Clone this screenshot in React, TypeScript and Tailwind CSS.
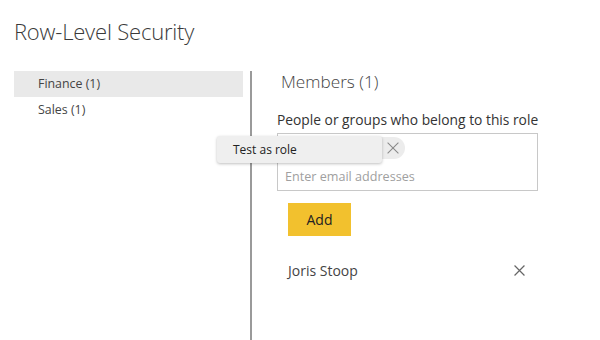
import React from "react";

function XIcon({ size, color, sw }: { size: number; color: string; sw: number }) {
  return (
    <svg width={size} height={size} viewBox="0 0 10 10" fill="none">
      <path d="M0.5 0.5 L9.5 9.5 M9.5 0.5 L0.5 9.5" stroke={color} strokeWidth={sw} />
    </svg>
  );
}

export default function App() {
  return (
    <div className="relative w-[600px] h-[340px] bg-white flex flex-col overflow-hidden font-['Open_Sans',sans-serif] text-[#333]">
      <h1 className="mt-[17px] ml-[14px] text-[22px] font-light leading-[28px] text-[#3a3a3a] tracking-[-0.2px]">
        Row-Level Security
      </h1>
      <div className="flex flex-1 mt-[26px]">
        <div className="w-[229px] ml-[14px] flex flex-col">
          <div className="h-[26px] bg-[#e9e9e9] pl-[24px] flex items-center text-[12.4px] text-[#444]">Finance (1)</div>
          <div className="h-[26px] pl-[24px] flex items-center text-[12.4px] text-[#444]">Sales (1)</div>
        </div>
        <div className="ml-[7px] w-[2px] bg-[#9a9a9a]" />
        <div className="ml-[25px] flex flex-col">
          <div className="ml-[4px] text-[17.2px] font-light leading-[22px] text-[#444]">Members (1)</div>
          <div className="mt-[18px] text-[13.8px] leading-[18px] text-[#333]">People or groups who belong to this role</div>
          <div className="mt-[4px] w-[261px] h-[58px] border border-[#c8c8c8] flex flex-col">
            <div className="mt-[3px] ml-[4px] w-[123px] h-[22px] rounded-full bg-[#ececec] flex items-center justify-end pr-[6px]">
              <XIcon size={12} color="#8a8a8a" sw={0.9} />
            </div>
            <div className="mt-[9px] ml-[7px] text-[12.6px] leading-[18px] text-[#a0a0a0]">Enter email addresses</div>
          </div>
          <button className="mt-[12px] ml-[11px] w-[63px] h-[33px] bg-[#f2c12e] text-[14px] text-[#222] flex items-center justify-center">
            Add
          </button>
          <div className="mt-[24px] ml-[11px] w-[237px] flex items-center justify-between h-[20px]">
            <span className="text-[14px] text-[#444]">Joris Stoop</span>
            <XIcon size={11} color="#666" sw={1.1} />
          </div>
        </div>
      </div>
      <div className="absolute left-[217px] top-[136px] w-[165px] h-[27px] bg-[#efefef] rounded-[3px] shadow-[0_1px_3px_rgba(0,0,0,0.25)] flex items-center pl-[16px] text-[12px] text-[#222]">
        Test as role
      </div>
    </div>
  );
}
